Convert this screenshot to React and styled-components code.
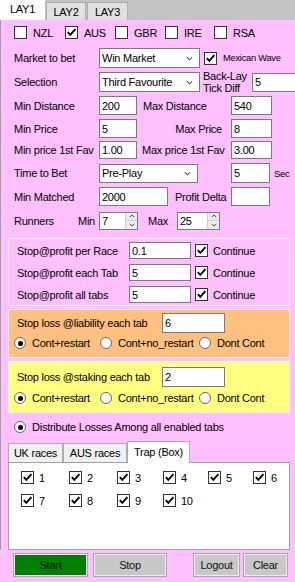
import React from 'react';
import styled, { createGlobalStyle } from 'styled-components';

const PINK = '#ffc0ff';
const FONT = '"Liberation Sans", Arial, sans-serif';

const GlobalStyle = createGlobalStyle`
  html, body { margin: 0; padding: 0; background: ${PINK}; }
  *, *::before, *::after { box-sizing: border-box; }
`;

const Window = styled.div`
  width: 295px;
  height: 582px;
  overflow: hidden;
  background: ${PINK};
  display: flex;
  flex-direction: column;
  font-family: ${FONT};
  font-size: 11px;
  letter-spacing: -0.25px;
  color: #000;
`;

const TopTabStrip = styled.div`
  flex: none;
  height: 20px;
  background: #c3c3c3;
  display: flex;
  align-items: flex-end;
`;

const TopTab = styled.div`
  flex: none;
  width: ${p => p.$w}px;
  height: ${p => (p.$active ? 20 : 18)}px;
  margin-left: ${p => p.$ml ?? 0}px;
  background: ${p => (p.$active ? '#fff' : '#e1e1e1')};
  border: 1px solid ${p => (p.$active ? '#fff' : '#adadad')};
  border-bottom: none;
  display: flex;
  align-items: center;
  justify-content: center;
  padding-bottom: ${p => (p.$active ? 4 : 0)}px;
`;

const TabPage = styled.div`
  flex: none;
  height: 530px;
  border-left: 1px solid #a0a0a0;
  display: flex;
  flex-direction: column;
`;

const Row = styled.div`
  flex: none;
  display: flex;
  align-items: center;
  height: ${p => p.$h ?? 20}px;
  margin-top: ${p => p.$mt ?? 0}px;
  padding-left: ${p => p.$pl ?? 13}px;
  white-space: nowrap;
`;

const Label = styled.span`
  flex: none;
  width: ${p => (p.$w ? `${p.$w}px` : 'auto')};
  margin-left: ${p => p.$ml ?? 0}px;
  padding-right: ${p => p.$pr ?? 0}px;
  text-align: ${p => (p.$right ? 'right' : 'left')};
  font-size: ${p => p.$fs ?? 11}px;
  line-height: ${p => p.$lh ?? 'normal'};
  white-space: ${p => (p.$wrap ? 'normal' : 'nowrap')};
`;

const TextBox = styled.input.attrs({ readOnly: true, type: 'text' })`
  flex: none;
  width: ${p => p.$w}px;
  height: ${p => p.$h ?? 20}px;
  margin: 0 0 0 ${p => p.$ml ?? 0}px;
  padding: 0 0 0 2px;
  border: 1px solid #7a7a7a;
  border-radius: 0;
  background: #fff;
  font-family: ${FONT};
  font-size: 11px;
  letter-spacing: -0.25px;
  color: #000;
  outline: none;
`;

const SelectBox = styled.div`
  flex: none;
  width: ${p => p.$w}px;
  height: ${p => p.$h ?? 20}px;
  margin-left: ${p => p.$ml ?? 0}px;
  border: 1px solid #7a7a7a;
  background: #fff;
  display: flex;
  align-items: center;
  justify-content: space-between;
  padding: 0 6px 0 2px;
`;

const SpinBox = styled.div`
  flex: none;
  width: ${p => p.$w}px;
  height: ${p => p.$h ?? 18}px;
  margin-left: ${p => p.$ml ?? 0}px;
  border: 1px solid #7a7a7a;
  background: #fff;
  display: flex;
`;

const SpinText = styled.span`
  flex: 1;
  display: flex;
  align-items: center;
  padding-left: 2px;
`;

const SpinButtons = styled.div`
  flex: none;
  width: 12px;
  display: flex;
  flex-direction: column;
  border-left: 1px solid #cfcfcf;
`;

const SpinButton = styled.div`
  flex: 1;
  background: #ececec;
  display: flex;
  align-items: center;
  justify-content: center;
  & + & { border-top: 1px solid #cfcfcf; }
`;

const CheckItem = styled.span`
  flex: none;
  display: inline-flex;
  align-items: center;
  width: ${p => (p.$w ? `${p.$w}px` : 'auto')};
  margin-left: ${p => p.$ml ?? 0}px;
  gap: ${p => p.$gap ?? 6}px;
  font-size: ${p => p.$fs ?? 11}px;
`;

const CheckSquare = styled.span`
  flex: none;
  width: 13px;
  height: 13px;
  border: 1px solid #333;
  background: #fff;
  display: inline-flex;
  align-items: center;
  justify-content: center;
`;

const RadioCircle = styled.span`
  flex: none;
  width: 12px;
  height: 12px;
  border-radius: 50%;
  border: 1px solid #666;
  background: #fff;
  display: inline-flex;
  align-items: center;
  justify-content: center;
  &::after {
    content: '';
    width: 5px;
    height: 5px;
    border-radius: 50%;
    background: ${p => (p.$on ? '#000' : 'transparent')};
  }
`;

const Panel = styled.div`
  flex: none;
  margin: ${p => p.$mt ?? 0}px 0 0 7px;
  width: 282px;
  background: ${p => p.$bg};
  border: 1px solid #f2f2f2;
  padding: ${p => p.$pt ?? 0}px 0 ${p => p.$pb ?? 0}px 0;
  display: flex;
  flex-direction: column;
`;

const InnerTabStrip = styled.div`
  flex: none;
  display: flex;
  align-items: flex-end;
  height: 21px;
  margin: 7px 0 0 7px;
`;

const InnerTab = styled.div`
  flex: none;
  width: ${p => p.$w}px;
  height: ${p => (p.$active ? 22 : 19)}px;
  margin-bottom: ${p => (p.$active ? -1 : 0)}px;
  background: ${p => (p.$active ? '#fff' : '#f0f0f0')};
  border: 1px solid #adadad;
  border-bottom: none;
  display: flex;
  align-items: center;
  justify-content: center;
  position: relative;
  z-index: ${p => (p.$active ? 1 : 0)};
  padding-bottom: ${p => (p.$active ? 2 : 0)}px;
`;

const TabContent = styled.div`
  flex: none;
  margin-left: 7px;
  width: 282px;
  height: 88px;
  background: #fff;
  border: 1px solid #a0a0a0;
  padding: 8px 0 0 12px;
  display: grid;
  grid-template-columns: 48px 48px 46px 45px 45px auto;
  grid-auto-rows: 13px;
  row-gap: 10px;
  align-content: start;
`;

const ButtonBar = styled.div`
  flex: none;
  display: flex;
  height: 24px;
  margin-top: 3px;
  padding-left: 13px;
`;

const Button = styled.div`
  flex: none;
  width: ${p => p.$w}px;
  margin-left: ${p => p.$ml ?? 0}px;
  background: ${p => p.$bg ?? '#c8c8c8'};
  border: 1px solid #a8a8a8;
  box-shadow: inset 0 0 0 1px #ececec;
  display: flex;
  align-items: center;
  justify-content: center;
  color: #111;
`;

const CheckMark = () => (
  <svg width="11" height="11" viewBox="0 0 11 11">
    <path d="M1.8 5.2 L4.3 7.8 L9.4 2.2" fill="none" stroke="#000" strokeWidth="1.9" />
  </svg>
);

const Chevron = ({ up, w = 8, h = 5, color = '#555' }) => (
  <svg width={w} height={h} viewBox="0 0 8 5">
    <path d={up ? 'M1 4 L4 1 L7 4' : 'M1 1 L4 4 L7 1'} fill="none" stroke={color} strokeWidth="1.2" />
  </svg>
);

const Check = ({ label, w, ml, fs, gap, checked = true }) => (
  <CheckItem $w={w} $ml={ml} $fs={fs} $gap={gap}>
    <CheckSquare>{checked && <CheckMark />}</CheckSquare>
    {label}
  </CheckItem>
);

const Radio = ({ label, w, ml, on }) => (
  <CheckItem $w={w} $ml={ml}>
    <RadioCircle $on={on} />
    {label}
  </CheckItem>
);

const Select = ({ value, w, h, ml }) => (
  <SelectBox $w={w} $h={h} $ml={ml}>
    <span>{value}</span>
    <Chevron w={7} h={5} />
  </SelectBox>
);

const Spin = ({ value, w, ml }) => (
  <SpinBox $w={w} $ml={ml}>
    <SpinText>{value}</SpinText>
    <SpinButtons>
      <SpinButton><Chevron up w={6} h={4} color="#333" /></SpinButton>
      <SpinButton><Chevron w={6} h={4} color="#333" /></SpinButton>
    </SpinButtons>
  </SpinBox>
);

const StopRow = ({ label, value, mt }) => (
  <Row $h={17} $mt={mt} $pl={8}>
    <Label $w={112}>{label}</Label>
    <TextBox $w={62} $h={17} value={value} />
    <Check label="Continue" ml={4} gap={5} />
  </Row>
);

const LossPanel = ({ bg, label, value, mt, pt, pb, rowGap }) => (
  <Panel $bg={bg} $mt={mt} $pt={pt} $pb={pb}>
    <Row $pl={8}>
      <Label $w={145}>{label}</Label>
      <TextBox $w={63} value={value} />
    </Row>
    <Row $h={14} $mt={rowGap} $pl={5}>
      <Radio label="Cont+restart" w={86} on />
      <Radio label="Cont+no_restart" w={99} />
      <Radio label="Dont Cont" />
    </Row>
  </Panel>
);

const traps = [1, 2, 3, 4, 5, 6, 7, 8, 9, 10];

export default function App() {
  return (
    <Window>
      <GlobalStyle />
      <TopTabStrip>
        <TopTab $w={45} $active>LAY1</TopTab>
        <TopTab $w={40} $ml={1}>LAY2</TopTab>
        <TopTab $w={41} $ml={1}>LAY3</TopTab>
      </TopTabStrip>

      <TabPage>
        <Row $h={13} $mt={6}>
          <Check label="NZL" w={51} checked={false} />
          <Check label="AUS" w={50} />
          <Check label="GBR" w={50} checked={false} />
          <Check label="IRE" w={49} checked={false} />
          <Check label="RSA" checked={false} />
        </Row>

        <Row $mt={9}>
          <Label $w={85}>Market to bet</Label>
          <Select value="Win Market" w={101} />
          <Check label="Mexican Wave" ml={4} fs={9.3} gap={6} />
        </Row>

        <Row $mt={4}>
          <Label $w={85}>Selection</Label>
          <Select value="Third Favourite" w={101} />
          <Label $w={49} $ml={3} $lh="12px" $wrap>Back-Lay Tick Diff</Label>
          <TextBox $w={60} $h={19} value="5" />
        </Row>

        <Row $mt={4} $h={19}>
          <Label $w={85}>Min Distance</Label>
          <TextBox $w={38} $h={19} value="200" />
          <Label $w={88} $ml={6}>Max Distance</Label>
          <TextBox $w={41} $h={19} value="540" />
        </Row>

        <Row $mt={4} $h={19}>
          <Label $w={85}>Min Price</Label>
          <TextBox $w={38} $h={19} value="5" />
          <Label $w={88} $ml={6} $right $pr={9}>Max Price</Label>
          <TextBox $w={41} $h={19} value="8" />
        </Row>

        <Row $mt={3} $h={18}>
          <Label $w={85}>Min price 1st Fav</Label>
          <TextBox $w={38} $h={18} value="1.00" />
          <Label $w={89} $ml={5} $right $pr={7}>Max price 1st Fav</Label>
          <TextBox $w={41} $h={18} value="3.00" />
        </Row>

        <Row $mt={4}>
          <Label $w={85}>Time to Bet</Label>
          <Select value="Pre-Play" w={99} h={19} />
          <TextBox $w={39} $ml={33} value="5" />
          <Label $ml={4} $fs={9.5}>Sec</Label>
        </Row>

        <Row $mt={4} $h={19}>
          <Label $w={85}>Min Matched</Label>
          <TextBox $w={69} $h={19} value="2000" />
          <Label $w={56} $ml={7}>Profit Delta</Label>
          <TextBox $w={39} $h={19} value="" />
        </Row>

        <Row $mt={6} $h={17}>
          <Label $w={64}>Runners</Label>
          <Label $w={21}>Min</Label>
          <Spin value="7" w={39} />
          <Label $w={29} $ml={10}>Max</Label>
          <Spin value="25" w={43} />
        </Row>

        <Panel $bg={PINK} $mt={9} $pt={3} $pb={2}>
          <StopRow label="Stop@profit per Race" value="0.1" />
          <StopRow label="Stop@profit each Tab" value="5" mt={5} />
          <StopRow label="Stop@profit all tabs" value="5" mt={5} />
        </Panel>

        <LossPanel bg="#ffc080" label="Stop loss @liability each tab" value="6" mt={3} pt={3} pb={7} rowGap={3} />
        <LossPanel bg="#ffff80" label="Stop loss @staking each tab" value="2" mt={3} pt={5} pb={7} rowGap={4} />

        <Row $h={14} $mt={7}>
          <Radio label="Distribute Losses Among all enabled tabs" on />
        </Row>

        <InnerTabStrip>
          <InnerTab $w={55}>UK races</InnerTab>
          <InnerTab $w={64}>AUS races</InnerTab>
          <InnerTab $w={63} $active>Trap (Box)</InnerTab>
        </InnerTabStrip>
        <TabContent>
          {traps.map(n => (
            <Check key={n} label={String(n)} gap={5} />
          ))}
        </TabContent>
      </TabPage>

      <ButtonBar>
        <Button $w={75} $bg="#008000">Start</Button>
        <Button $w={74} $ml={5}>Stop</Button>
        <Button $w={47} $ml={26}>Logout</Button>
        <Button $w={45} $ml={3}>Clear</Button>
      </ButtonBar>
    </Window>
  );
}
